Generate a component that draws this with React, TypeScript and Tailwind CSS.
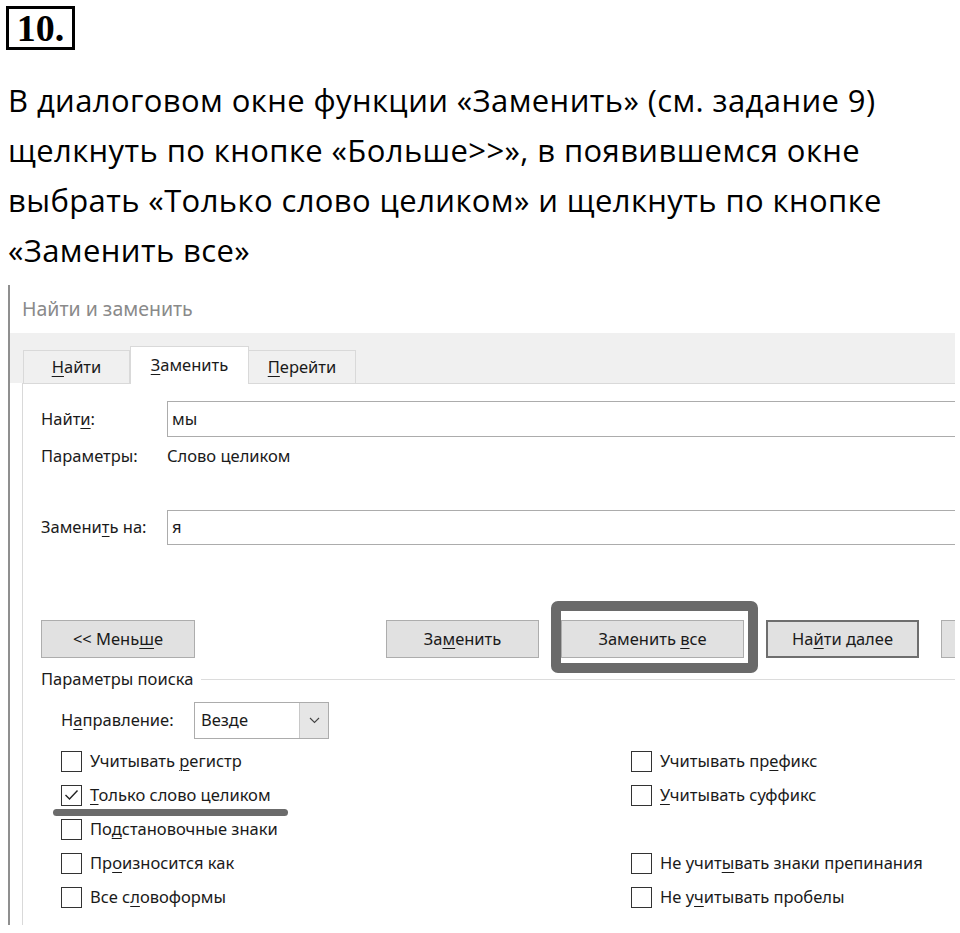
import React from 'react';

const U: React.FC<{ children: React.ReactNode }> = ({ children }) => (
  <span className="underline decoration-1 underline-offset-[3px]">{children}</span>
);

const Btn: React.FC<{ children?: React.ReactNode; w: string; strong?: boolean }> = ({ children, w, strong }) => (
  <div
    className={`${w} h-[38px] shrink-0 flex items-center justify-center bg-[#e1e1e1] ${
      strong ? 'border-2 border-[#6e6e6e]' : 'border border-[#adadad]'
    }`}
  >
    <span>{children}</span>
  </div>
);

const Check: React.FC<{ checked?: boolean; children: React.ReactNode }> = ({ checked, children }) => (
  <div className="flex items-center h-[34px] gap-[8px]">
    <div className="w-[21px] h-[21px] border-[1.5px] border-[#333] bg-white flex items-center justify-center">
      {checked && (
        <svg width="15" height="12" viewBox="0 0 15 12">
          <polyline points="1.5,6 5.5,10 13.5,1.5" fill="none" stroke="#222" strokeWidth="1.4" />
        </svg>
      )}
    </div>
    <span>{children}</span>
  </div>
);

export default function App() {
  return (
    <div className="w-[960px] h-[933px] bg-white overflow-hidden text-black">
      {/* номер задания */}
      <div className="pt-[6px] pl-[6px]">
        <div className="w-[69px] h-[44px] border-[3px] border-black flex items-center justify-center font-['Liberation_Serif',serif] font-bold text-[38px] leading-none">
          10.
        </div>
      </div>

      {/* текст задания */}
      <div className="mt-[25px] pl-[8px] font-['Open_Sans',sans-serif] text-[31px] tracking-[0.4px] leading-[50px]">
        <div>В диалоговом окне функции «Заменить» (см. задание 9)</div>
        <div>щелкнуть по кнопке «Больше&gt;&gt;», в появившемся окне</div>
        <div>выбрать «Только слово целиком» и щелкнуть по кнопке</div>
        <div>«Заменить все»</div>
      </div>

      {/* диалог */}
      <div className="mt-[10px] ml-[8px] w-[947px] h-[640px] border-l-2 border-[#8f8f8f] overflow-hidden font-['Noto_Sans',sans-serif] text-[16.5px] text-[#1a1a1a]">
        <div className="h-[48px] pl-[12px] flex items-center text-[19.5px] text-[#8a8a8a]">Найти и заменить</div>

        <div className="h-[50px] bg-[#f0f0f0] pl-[13px] flex items-end">
          <div className="w-[107px] h-[33px] border border-b-0 border-[#d9d9d9] flex items-center justify-center">
            <span>
              <U>Н</U>айти
            </span>
          </div>
          <div className="w-[119px] h-[38px] -mb-px bg-white border border-b-0 border-[#d9d9d9] flex items-center justify-center relative z-10">
            <span>
              <U>З</U>аменить
            </span>
          </div>
          <div className="w-[107px] h-[33px] border border-b-0 border-l-0 border-[#d9d9d9] flex items-center justify-center">
            <span>
              <U>П</U>ерейти
            </span>
          </div>
        </div>

        <div className="ml-[12px] w-[1100px] h-[542px] border-l border-t border-[#d9d9d9] pl-[18px]">
          <div className="mt-[17px] flex items-center h-[36px]">
            <div className="w-[126px]">
              Найт<U>и</U>:
            </div>
            <div className="w-[840px] h-[36px] border border-[#acacac] flex items-center pl-[4px]">мы</div>
          </div>
          <div className="flex items-center h-[38px]">
            <div className="w-[126px]">Параметры:</div>
            <div>Слово целиком</div>
          </div>

          <div className="mt-[35px] flex items-center h-[35px]">
            <div className="w-[126px]">
              Замени<U>т</U>ь на:
            </div>
            <div className="w-[840px] h-[35px] border border-[#acacac] flex items-center pl-[4px]">я</div>
          </div>

          <div className="mt-[75px] flex items-center">
            <Btn w="w-[154px]">
              &lt;&lt; Мень<U>ш</U>е
            </Btn>
            <div className="ml-[191px] flex gap-[22px]">
              <Btn w="w-[153px]">
                За<U>м</U>енить
              </Btn>
              <div className="relative">
                <Btn w="w-[183px]">
                  Заменить <U>в</U>се
                </Btn>
                <div className="absolute left-[-10px] top-[-19px] w-[207px] h-[72px] border-[10px] border-[#6a6a6a] rounded-[7px]" />
              </div>
              <Btn w="w-[153px]" strong>
                На<U>й</U>ти далее
              </Btn>
              <Btn w="w-[153px]" />
            </div>
          </div>

          <div className="mt-[10px] h-[22px] flex items-center">
            <span>Параметры поиска</span>
            <div className="ml-[8px] w-[760px] h-px bg-[#dcdcdc]" />
          </div>

          <div className="pl-[20px]">
            <div className="mt-[12px] flex items-center h-[37px]">
              <div className="w-[133px]">
                Н<U>а</U>правление:
              </div>
              <div className="w-[135px] h-[37px] border border-[#acacac] flex">
                <div className="flex-1 flex items-center pl-[6px]">Везде</div>
                <div className="w-[29px] bg-[#e6e6e6] border-l border-[#c8c8c8] flex items-center justify-center">
                  <svg width="11" height="7" viewBox="0 0 11 7">
                    <polyline points="1,1 5.5,5.5 10,1" fill="none" stroke="#444" strokeWidth="1.1" />
                  </svg>
                </div>
              </div>
            </div>

            <div className="mt-[5px] grid grid-cols-[570px_1fr]">
              <Check>
                Учитывать <U>р</U>егистр
              </Check>
              <Check>
                Учитывать пр<U>е</U>фикс
              </Check>
              <div className="relative">
                <Check checked>
                  <U>Т</U>олько слово целиком
                </Check>
                <div className="absolute left-[-8px] top-[31px] w-[235px] h-[7px] rounded-full bg-[#6b6b6b]" />
              </div>
              <Check>
                <U>У</U>читывать суффикс
              </Check>
              <Check>
                По<U>д</U>становочные знаки
              </Check>
              <div className="h-[34px]" />
              <Check>
                Пр<U>о</U>износится как
              </Check>
              <Check>
                Не учит<U>ы</U>вать знаки препинания
              </Check>
              <Check>
                Все с<U>л</U>овоформы
              </Check>
              <Check>
                Не у<U>ч</U>итывать пробелы
              </Check>
            </div>
          </div>
        </div>
      </div>
    </div>
  );
}
